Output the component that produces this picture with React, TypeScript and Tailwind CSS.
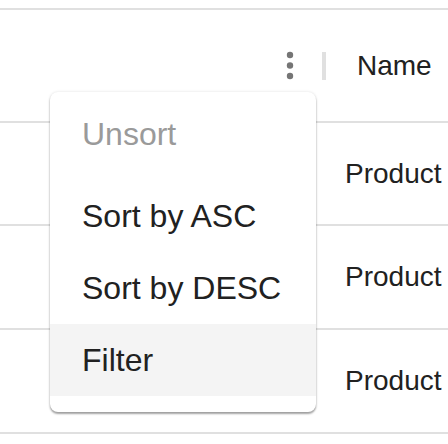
import React from "react";

const rows = ["Product", "Product", "Product"];

const menuItems = [
  { label: "Unsort", disabled: true },
  { label: "Sort by ASC" },
  { label: "Sort by DESC" },
  { label: "Filter", hover: true },
];

function KebabIcon() {
  return (
    <svg width="8" height="30" viewBox="0 0 8 30">
      <circle cx="4" cy="4" r="3.2" fill="#757575" />
      <circle cx="4" cy="14.5" r="3.2" fill="#757575" />
      <circle cx="4" cy="25" r="3.2" fill="#757575" />
    </svg>
  );
}

export default function App() {
  return (
    <div className="relative w-[448px] h-[444px] bg-white overflow-hidden pt-[8px] font-['Liberation_Sans',Arial,sans-serif] text-[#212121]">
      <div className="border-t-2 border-[#e0e0e0]">
        {/* header */}
        <div className="h-[113px] border-b-2 border-[#e0e0e0] flex items-center">
          <div className="w-[286px]" />
          <div className="w-[8px] flex items-center">
            <KebabIcon />
          </div>
          <div className="w-[28px]" />
          <div className="w-[4px] h-[28px] bg-[#e0e0e0]" />
          <div className="pl-[31px] text-[28px] leading-none">Name</div>
        </div>

        {/* rows */}
        {rows.map((r, i) => (
          <div
            key={i}
            className={`${i === 0 ? "h-[103px]" : "h-[104px]"} border-b-2 border-[#e0e0e0] flex items-center pl-[345px] text-[28px]`}
          >
            {r}
          </div>
        ))}
      </div>

      {/* column menu */}
      <div className="absolute left-[50px] top-[92px] w-[266px] h-[320px] bg-white rounded-lg py-4 shadow-[0_2px_2px_rgba(0,0,0,0.35),0_0_3px_rgba(0,0,0,0.12)]">
        {menuItems.map((m) => (
          <div
            key={m.label}
            className={`h-[72px] flex items-center px-8 text-[32px] ${m.disabled ? "text-[#9a9a9a] pb-5" : ""} ${m.hover ? "bg-[#f4f4f4]" : ""}`}
          >
            {m.label}
          </div>
        ))}
      </div>
    </div>
  );
}
